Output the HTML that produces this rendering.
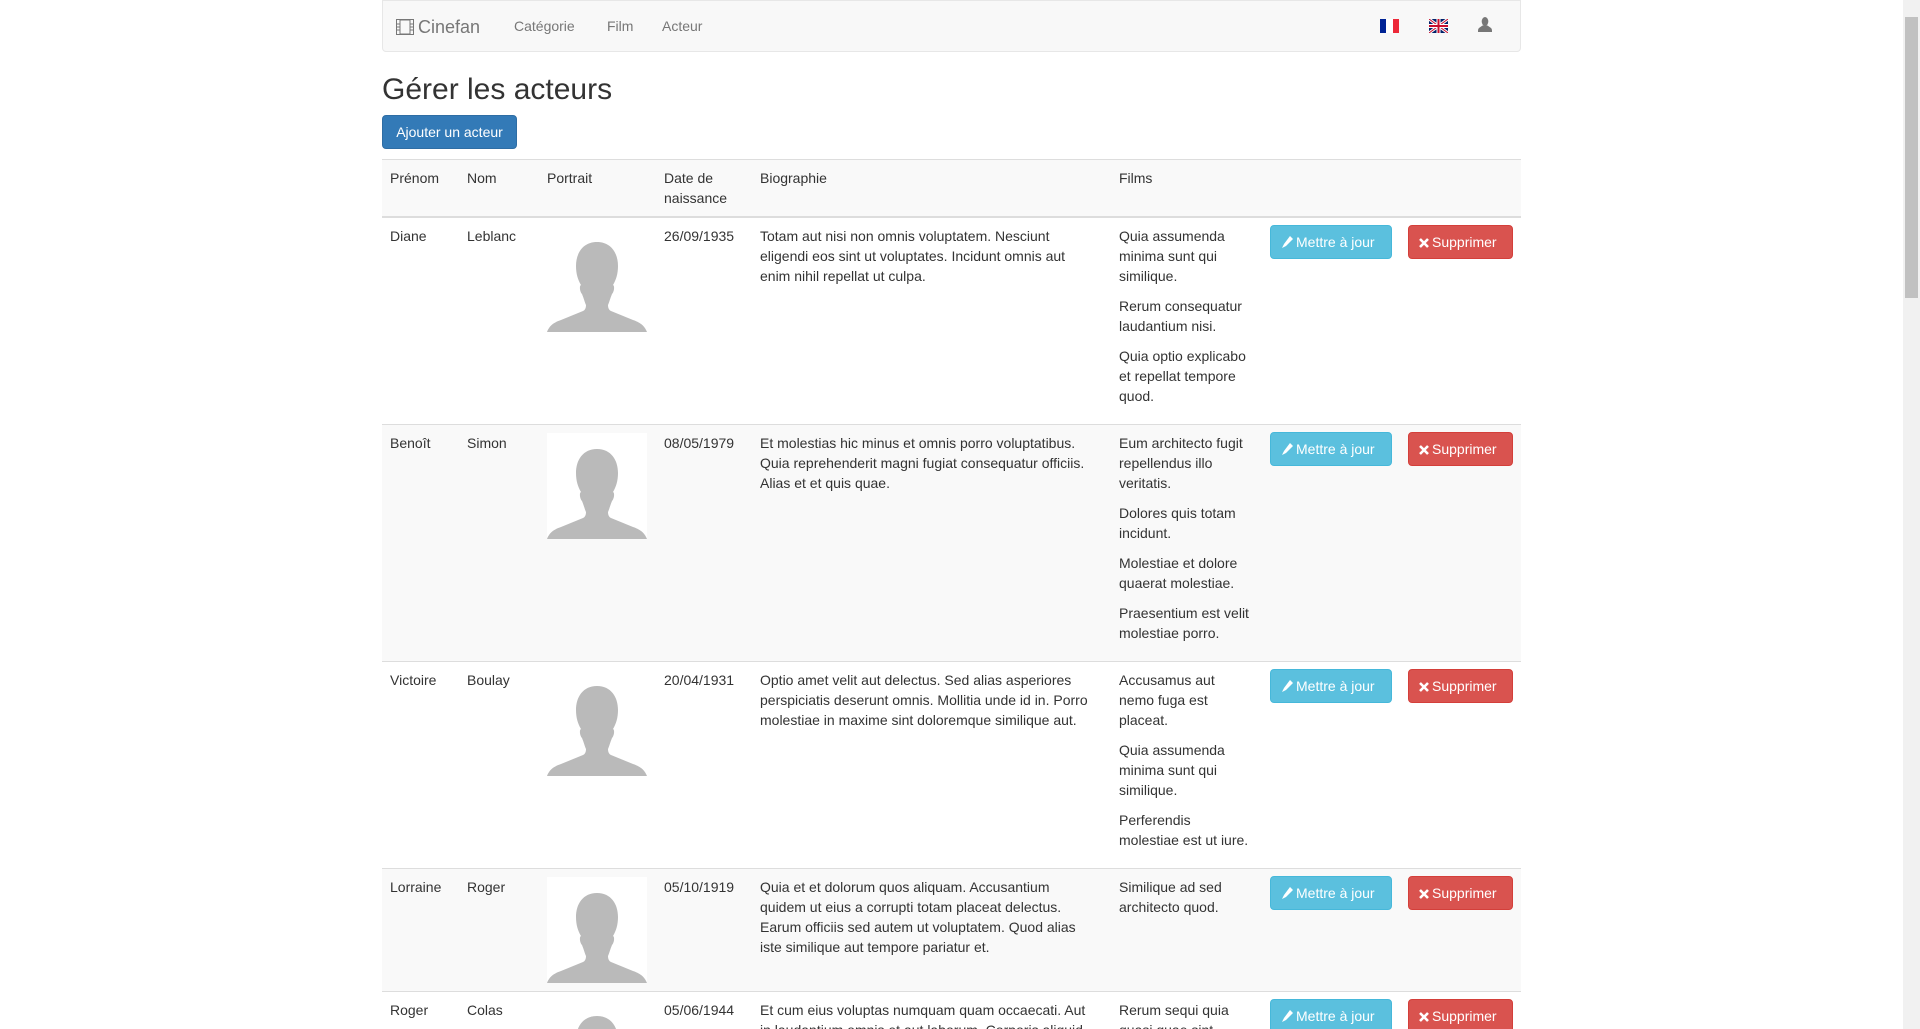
<!DOCTYPE html>
<html><head><meta charset="utf-8"><style>
*{box-sizing:border-box}
html,body{margin:0;padding:0;overflow:hidden;height:1029px}
body{font-family:"Liberation Sans",Arial,sans-serif;font-size:14px;line-height:20px;color:#333;background:#fff;width:1920px;position:relative}
.container{position:absolute;left:382px;width:1139px;top:0;height:1029px;overflow:hidden}
.navbar{height:52px;background:#f8f8f8;border:1px solid #e7e7e7;border-radius:0 0 4px 4px;position:relative}
.brand{position:absolute;left:13px;top:14px;font-size:18px;color:#777;line-height:24px}
.brand svg{vertical-align:-2px;margin-right:4px}
.nav a{position:absolute;top:15px;color:#777;text-decoration:none}
h1{font-size:30px;font-weight:500;margin:0;position:absolute;top:72px;left:0;line-height:36px}
.btnadd{position:absolute;top:115px;left:0;height:34px;width:135px;background:#337ab7;border:1px solid #2e6da4;color:#fff;border-radius:4px;text-align:center;line-height:32px}
table{position:absolute;top:159px;left:0;width:1139px;border-collapse:collapse;table-layout:fixed}
td{padding:8px;vertical-align:top;border-top:1px solid #ddd;text-align:left;font-weight:normal}
tr.h td{background:#f9f9f9;border-bottom:2px solid #ddd}
tr.g td{background:#f9f9f9}
p{margin:0 0 10px}
.img{width:100px;height:106px;background:#fff;display:block}
.b{display:inline-block;height:34px;line-height:32px;border-radius:4px;color:#fff;white-space:nowrap;margin-top:-1px}
.b svg{vertical-align:-1px;margin-right:3px}
.bi{background:#5bc0de;border:1px solid #46b8da;width:122px;padding:0 10px}
.bd{background:#d9534f;border:1px solid #d43f3a;width:105px;padding:0 10px}
.sb{position:absolute;right:0;top:0;width:17px;height:1029px;background:#f1f1f1}
.th{position:absolute;right:2px;left:2px;top:17px;height:281px;background:#c1c1c1}
</style></head><body>
<svg width="0" height="0" style="position:absolute"><defs>
<symbol id="p" viewBox="0 0 100 106"><rect width="100" height="106" fill="#fff"/><path fill="#bababa" d="M50 16c-14 0-21 11-21 24 0 8 2 14 5 19-2 1-1 7 1 9 2 5 3 9 4 11 0 3-1 5-3 6l-22 9c-9 3-12 7-14 12v0h100c-2-5-5-9-14-12l-22-9c-2-1-3-3-3-6 1-2 2-6 4-11 2-2 3-8 1-9 3-5 5-11 5-19 0-13-7-24-21-24z"/></symbol>
<symbol id="pen" viewBox="0 0 12 12"><path d="M9 0l3 3-7 7-4 2 2-4z" fill="#fff"/></symbol>
<symbol id="x" viewBox="0 0 10 10"><path d="M1 1l8 8M9 1l-8 8" stroke="#fff" stroke-width="2.6"/></symbol>
</defs></svg>
<div class="container">
<div class="navbar">
<div class="brand"><svg width="18" height="16" viewBox="0 0 18 16"><rect x="0.5" y="0.5" width="17" height="15" fill="none" stroke="#777"/><rect x="4" y="1" width="10" height="14" fill="none" stroke="#777"/><path d="M0 5h4M0 8h4M0 11h4M14 5h4M14 8h4M14 11h4" stroke="#777"/></svg>Cinefan</div>
<div class="nav"><a style="left:131px">Catégorie</a><a style="left:224px">Film</a><a style="left:279px">Acteur</a></div>
<svg style="position:absolute;left:997px;top:18px" width="19" height="14"><rect width="6" height="14" fill="#002395"/><rect x="6" width="7" height="14" fill="#fff"/><rect x="13" width="6" height="14" fill="#ed2939"/></svg>
<svg style="position:absolute;left:1046px;top:18px" width="19" height="14" viewBox="0 0 19 14"><rect width="19" height="14" fill="#012169"/><path d="M0 0L19 14M19 0L0 14" stroke="#fff" stroke-width="3"/><path d="M0 0L19 14M19 0L0 14" stroke="#c8102e" stroke-width="1"/><path d="M9.5 0v14M0 7h19" stroke="#fff" stroke-width="4"/><path d="M9.5 0v14M0 7h19" stroke="#c8102e" stroke-width="2"/></svg>
<svg style="position:absolute;left:1095px;top:16px" width="14" height="15" viewBox="0 0 14 15"><ellipse cx="7" cy="4.5" rx="3.3" ry="4.5" fill="#777"/><path d="M4.5 8.5L1 11c-1 1-1 2-1 4h14c0-2 0-3-1-4L9.5 8.5z" fill="#777"/></svg>
</div>
<h1>Gérer les acteurs</h1>
<div class="btnadd">Ajouter un acteur</div>
<table>
<colgroup><col style="width:77px"><col style="width:80px"><col style="width:117px"><col style="width:96px"><col style="width:359px"><col style="width:151px"><col style="width:138px"><col style="width:121px"></colgroup>
<tr class="h"><td>Prénom</td><td>Nom</td><td>Portrait</td><td>Date de naissance</td><td>Biographie</td><td>Films</td><td></td><td></td></tr>
<tr style="height:207px"><td>Diane</td><td>Leblanc</td><td><svg class="img"><use href="#p"/></svg></td><td>26/09/1935</td><td>Totam aut nisi non omnis voluptatem. Nesciunt<br>eligendi eos sint ut voluptates. Incidunt omnis aut<br>enim nihil repellat ut culpa.</td><td><p>Quia assumenda<br>minima sunt qui<br>similique.</p><p>Rerum consequatur<br>laudantium nisi.</p><p>Quia optio explicabo<br>et repellat tempore<br>quod.</p></td><td><span class="b bi"><svg width="12" height="12"><use href="#pen"/></svg>Mettre à jour</span></td><td><span class="b bd"><svg width="10" height="10"><use href="#x"/></svg>Supprimer</span></td></tr>
<tr class="g" style="height:237px"><td>Benoît</td><td>Simon</td><td><svg class="img"><use href="#p"/></svg></td><td>08/05/1979</td><td>Et molestias hic minus et omnis porro voluptatibus.<br>Quia reprehenderit magni fugiat consequatur officiis.<br>Alias et et quis quae.</td><td><p>Eum architecto fugit<br>repellendus illo<br>veritatis.</p><p>Dolores quis totam<br>incidunt.</p><p>Molestiae et dolore<br>quaerat molestiae.</p><p>Praesentium est velit<br>molestiae porro.</p></td><td><span class="b bi"><svg width="12" height="12"><use href="#pen"/></svg>Mettre à jour</span></td><td><span class="b bd"><svg width="10" height="10"><use href="#x"/></svg>Supprimer</span></td></tr>
<tr style="height:207px"><td>Victoire</td><td>Boulay</td><td><svg class="img"><use href="#p"/></svg></td><td>20/04/1931</td><td>Optio amet velit aut delectus. Sed alias asperiores<br>perspiciatis deserunt omnis. Mollitia unde id in. Porro<br>molestiae in maxime sint doloremque similique aut.</td><td><p>Accusamus aut<br>nemo fuga est<br>placeat.</p><p>Quia assumenda<br>minima sunt qui<br>similique.</p><p>Perferendis<br>molestiae est ut iure.</p></td><td><span class="b bi"><svg width="12" height="12"><use href="#pen"/></svg>Mettre à jour</span></td><td><span class="b bd"><svg width="10" height="10"><use href="#x"/></svg>Supprimer</span></td></tr>
<tr class="g" style="height:123px"><td>Lorraine</td><td>Roger</td><td><svg class="img"><use href="#p"/></svg></td><td>05/10/1919</td><td>Quia et et dolorum quos aliquam. Accusantium<br>quidem ut eius a corrupti totam placeat delectus.<br>Earum officiis sed autem ut voluptatem. Quod alias<br>iste similique aut tempore pariatur et.</td><td><p>Similique ad sed<br>architecto quod.</p></td><td><span class="b bi"><svg width="12" height="12"><use href="#pen"/></svg>Mettre à jour</span></td><td><span class="b bd"><svg width="10" height="10"><use href="#x"/></svg>Supprimer</span></td></tr>
<tr><td>Roger</td><td>Colas</td><td><svg class="img"><use href="#p"/></svg></td><td>05/06/1944</td><td>Et cum eius voluptas numquam quam occaecati. Aut<br>in laudantium omnis et aut laborum. Corporis aliquid</td><td><p>Rerum sequi quia<br>quasi quae sint</p></td><td><span class="b bi"><svg width="12" height="12"><use href="#pen"/></svg>Mettre à jour</span></td><td><span class="b bd"><svg width="10" height="10"><use href="#x"/></svg>Supprimer</span></td></tr>
</table>
</div>
<div class="sb"><div class="th"></div></div>
</body></html>
